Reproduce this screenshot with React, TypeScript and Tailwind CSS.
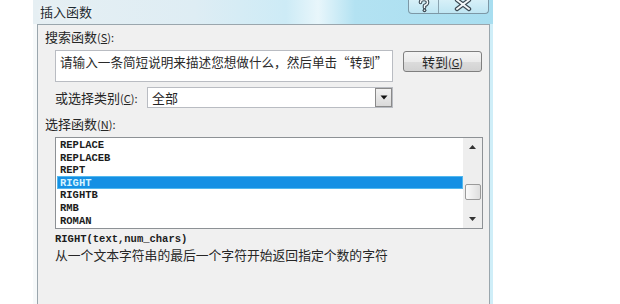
import React from "react";

const cjk = "font-['Noto_Sans_CJK_SC','Noto_Sans_CJK_JP',sans-serif]";
const mono = "font-['Liberation_Mono',monospace]";

const items = ["REPLACE", "REPLACEB", "REPT", "RIGHT", "RIGHTB", "RMB", "ROMAN"];

function HelpIcon() {
  return (
    <svg width="30" height="14" viewBox="0 0 30 14">
      <g fill="none" strokeLinecap="round" strokeLinejoin="round">
        <path d="M11.5 2.5 Q11.5 -0.5 15 -0.5 Q18.5 -0.5 18.5 2.5 Q18.5 4.5 15.5 5.5 L15.5 7.5" stroke="#3d4b55" strokeWidth="3.6" />
        <path d="M11.5 2.5 Q11.5 -0.5 15 -0.5 Q18.5 -0.5 18.5 2.5 Q18.5 4.5 15.5 5.5 L15.5 7.5" stroke="#f4f8fa" strokeWidth="1.4" />
        <circle cx="15.5" cy="10.3" r="1.9" fill="#3d4b55" />
        <circle cx="15.5" cy="10.3" r="0.8" fill="#f4f8fa" />
      </g>
    </svg>
  );
}

function CloseIcon() {
  return (
    <svg width="50" height="14" viewBox="0 0 50 14">
      <g strokeLinecap="round">
        <path d="M18 0 L30 9 M30 0 L18 9" stroke="#3d4b55" strokeWidth="4.4" />
        <path d="M18 0 L30 9 M30 0 L18 9" stroke="#f4f8fa" strokeWidth="2" />
      </g>
    </svg>
  );
}

function Label({ text, k }: { text: string; k: string }) {
  return (
    <span className={`${cjk} flex items-center h-[16px] text-[13px] leading-[16px] text-[#262626] whitespace-nowrap`}>
      {text}
      <span className="text-[11px] leading-[16px]">
        (<span className="underline">{k}</span>):
      </span>
    </span>
  );
}

export default function App() {
  return (
    <div className="w-[620px] h-[304px] bg-white overflow-hidden">
      <div className="ml-[33px] w-[460px] h-[304px] flex flex-col">
        {/* title bar */}
        <div className="h-[24px] flex items-start bg-[linear-gradient(90deg,#e6eff3_0%,#deedf4_35%,#cdebf6_55%,#e8f6fb_62%,#b3e2f2_70%,#a8def0_100%)]">
          <span
            className={`${cjk} ml-[7px] mt-[3px] text-[13px] leading-[17px] text-[#1e2a30] [text-shadow:0_0_5px_#ffffff]`}
          >
            插入函数
          </span>
          <div className="flex-1" />
          <div className="mr-[4px] flex h-[14px] rounded-b-[4px] border border-t-0 border-[#7d98a6] bg-[linear-gradient(180deg,#d7f0f8,#bfe6f3)] overflow-hidden">
            <div className="w-[30px] h-[14px] border-r border-[#8aa3b0]">
              <HelpIcon />
            </div>
            <div className="w-[49px] h-[14px]">
              <CloseIcon />
            </div>
          </div>
        </div>

        {/* body */}
        <div className="flex flex-1">
          <div className="w-[4px] bg-[#f6f9fa]" />
          <div className="w-[453px] border border-b-0 border-[#9aa6ad] bg-[#f0f0f0] flex flex-col">
            <div className="flex pl-[7px] pt-[4px]">
              <Label text="搜索函数" k="S" />
            </div>

            <div className="flex items-start pl-[17px] mt-[5px]">
              <div className="w-[338px] h-[32px] border border-[#b9bcc2] bg-white pl-[4px] pt-[3px] flex items-start">
                <span className={`${cjk} text-[12.6px] leading-[16px] text-[#2a2a2a] whitespace-nowrap`}>
                  请输入一条简短说明来描述您想做什么，然后单击“转到”
                </span>
              </div>
              <button className="ml-[10px] mt-[1px] w-[79px] h-[21px] rounded-[3px] border border-[#7f7f7f] bg-[linear-gradient(180deg,#f4f4f4_0%,#ebebeb_50%,#dcdcdc_51%,#d2d2d2_100%)] flex items-center justify-center">
                <span className={`${cjk} flex items-center text-[13px] leading-[16px] text-[#262626]`}>
                  转到<span className="text-[11px]">(<span className="underline">G</span>)</span>
                </span>
              </button>
            </div>

            <div className="flex items-center pl-[17px] mt-[5px] h-[21px]">
              <div className="w-[92px] flex">
                <Label text="或选择类别" k="C" />
              </div>
              <div className="w-[246px] h-[21px] border border-[#b9bcc2] bg-white flex items-center">
                <span className={`${cjk} pl-[4px] text-[13px] leading-[16px] text-[#262626] flex-1`}>全部</span>
                <div className="w-[17px] h-[19px] border border-[#8a8a8a] bg-[linear-gradient(180deg,#f2f2f2,#d9d9d9)] flex items-center justify-center">
                  <svg width="8" height="5" viewBox="0 0 8 5">
                    <path d="M0.5 0.5 L7.5 0.5 L4 4.5 Z" fill="#111" />
                  </svg>
                </div>
              </div>
            </div>

            <div className="flex pl-[7px] mt-[8px]">
              <Label text="选择函数" k="N" />
            </div>

            <div className="ml-[17px] mt-[5px] w-[428px] h-[92px] border border-[#8d9195] bg-white flex">
              <div className="flex-1 pt-[0.7px] pl-[1px]">
                {items.map((it) => (
                  <div
                    key={it}
                    className={`h-[12.6px] pl-[3px] flex items-center ${mono} font-bold text-[10.5px] leading-[12px] ${
                      it === "RIGHT"
                        ? "bg-[#1590e4] text-[#d6f3ff] shadow-[inset_0_0_0_1px_#52b8ee]"
                        : "text-[#1c1c1c]"
                    }`}
                  >
                    {it}
                  </div>
                ))}
              </div>
              <div className="w-[19px] bg-[#eeeeee] flex flex-col items-center">
                <div className="h-[18px] flex items-center justify-center">
                  <svg width="7" height="4" viewBox="0 0 7 4">
                    <path d="M0 4 L7 4 L3.5 0 Z" fill="#333" />
                  </svg>
                </div>
                <div className="h-[28px]" />
                <div className="w-[16px] h-[16px] rounded-[2px] border border-[#9a9a9a] bg-[linear-gradient(90deg,#fafafa,#dedede)]" />
                <div className="flex-1" />
                <div className="h-[18px] flex items-center justify-center">
                  <svg width="7" height="4" viewBox="0 0 7 4">
                    <path d="M0 0 L7 0 L3.5 4 Z" fill="#333" />
                  </svg>
                </div>
              </div>
            </div>

            <div className={`flex ml-[17px] mt-[4px] h-[12px] items-center ${mono} font-bold text-[10.5px] leading-[12px] text-[#1c1c1c]`}>
              RIGHT(text,num_chars)
            </div>
            <div className={`flex ml-[17px] mt-[3px] h-[14px] items-center ${cjk} text-[12.8px] leading-[14px] text-[#262626] whitespace-nowrap`}>
              从一个文本字符串的最后一个字符开始返回指定个数的字符
            </div>
          </div>
          <div className="w-[3px] bg-[#cfeef8]" />
        </div>
      </div>
    </div>
  );
}
